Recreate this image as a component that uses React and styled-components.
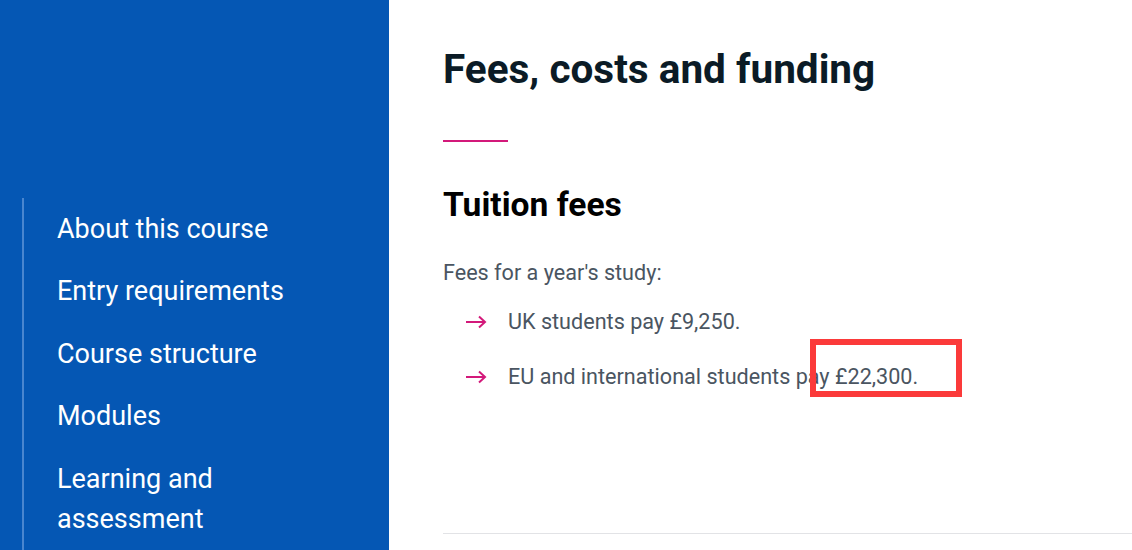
import React from 'react';
import styled, { createGlobalStyle } from 'styled-components';

const GlobalStyle = createGlobalStyle`
  html, body {
    margin: 0;
    padding: 0;
    background: #ffffff;
    font-family: Roboto, "Liberation Sans", Arial, sans-serif;
  }
`;

const navItems = [
  'About this course',
  'Entry requirements',
  'Course structure',
  'Modules',
  'Learning and assessment',
];

const fees = [
  'UK students pay £9,250.',
  'EU and international students pay £22,300.',
];

const App = () => (
  <>
    <GlobalStyle />
    <Page>
      <Sidebar>
        <Nav>
          {navItems.map((item) => (
            <NavItem key={item} href="#">{item}</NavItem>
          ))}
        </Nav>
      </Sidebar>
      <Main>
        <Title>Fees, costs and funding</Title>
        <Accent />
        <SubTitle>Tuition fees</SubTitle>
        <Intro>Fees for a year's study:</Intro>
        <FeeList>
          {fees.map((fee) => (
            <FeeItem key={fee}>
              <Arrow viewBox="0 0 22 14" aria-hidden="true">
                <path d="M1 7h19M14 1.5l6 5.5-6 5.5" fill="none" stroke="#d3197a" strokeWidth="2" />
              </Arrow>
              {fee}
            </FeeItem>
          ))}
        </FeeList>
        <Rule />
        <Highlight />
      </Main>
    </Page>
  </>
);

const Page = styled.div`
  display: flex;
  height: 550px;
  overflow: hidden;
`;

const Sidebar = styled.aside`
  flex: 0 0 389px;
  background-color: #0557b4;
  padding: 198px 0 0 22px;
  box-sizing: border-box;
`;

const Nav = styled.nav`
  display: flex;
  flex-direction: column;
  gap: 22.4px;
  border-left: 2px solid #4a86cf;
  padding: 11px 60px 40px 33px;
  min-height: 400px;
`;

const NavItem = styled.a`
  color: #ffffff;
  text-decoration: none;
  font-size: 27px;
  line-height: 40px;
`;

const Main = styled.main`
  position: relative;
  flex: 1;
  padding: 44px 0 0 54px;
  display: flex;
  flex-direction: column;
`;

const Title = styled.h1`
  margin: 0;
  font-size: 40.5px;
  line-height: 50px;
  font-weight: 700;
  color: #0b1b26;
`;

const Accent = styled.div`
  width: 65px;
  height: 2px;
  background-color: #d3197a;
  margin-top: 46px;
`;

const SubTitle = styled.h2`
  margin: 43px 0 0;
  font-size: 33.6px;
  line-height: 40px;
  font-weight: 700;
  color: #000000;
`;

const Intro = styled.p`
  margin: 34px 0 0;
  font-size: 21.6px;
  line-height: 28px;
  color: #4a5561;
`;

const FeeList = styled.ul`
  list-style: none;
  margin: 21px 0 0;
  padding: 0 0 0 22px;
  display: flex;
  flex-direction: column;
  gap: 27px;
`;

const FeeItem = styled.li`
  display: flex;
  align-items: center;
  gap: 21px;
  font-size: 21.6px;
  line-height: 28px;
  color: #4a5561;
`;

const Arrow = styled.svg`
  width: 22px;
  height: 14px;
  flex: 0 0 22px;
`;

const Rule = styled.hr`
  margin: 142px 0 0;
  border: none;
  border-top: 1px solid #e2e3e6;
`;

const Highlight = styled.div`
  position: absolute;
  left: 421px;
  top: 339px;
  width: 152px;
  height: 58px;
  box-sizing: border-box;
  border: 6px solid #fb3a3a;
  pointer-events: none;
`;

export default App;
